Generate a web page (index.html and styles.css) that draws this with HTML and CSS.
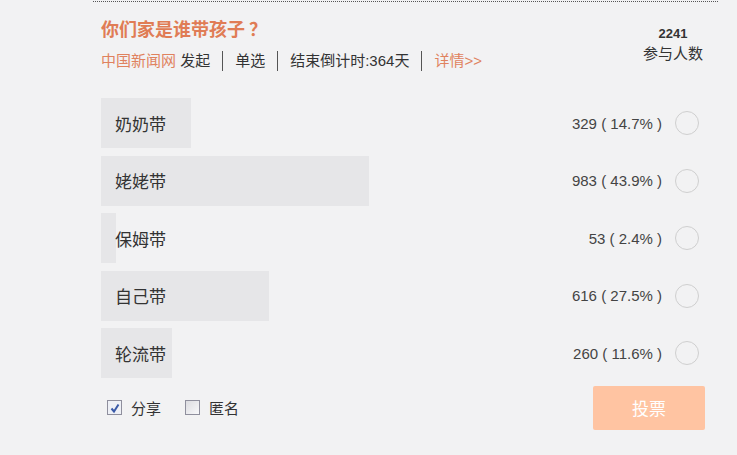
FILE: index.html
```html
<!DOCTYPE html>
<html>
  <head>
    <title>你们家是谁带孩子？</title>
    <link rel="stylesheet" href="styles.css">
  </head>
  <body>
    <div class="topline"></div>
    <div class="poll">
      <div class="poll-head">
        <div class="poll-info">
          <h1>你们家是谁带孩子<span class="qmark">？</span></h1>
          <div class="meta">
            <span class="item"><span class="source">中国新闻网</span> 发起</span>
            <span class="item">单选</span>
            <span class="item">结束倒计时:364天</span>
            <span class="item"><a class="more" href="#">详情&gt;&gt;</a></span>
          </div>
        </div>
        <div class="total">
          <div class="total-num">2241</div>
          <div class="total-label">参与人数</div>
        </div>
      </div>

      <ul class="options">
        <li class="option">
          <div class="bar" style="width: 14.7%"></div>
          <span class="label">奶奶带</span>
          <span class="stat">329 ( 14.7% )<span class="radio"></span></span>
        </li>
        <li class="option">
          <div class="bar" style="width: 43.9%"></div>
          <span class="label">姥姥带</span>
          <span class="stat">983 ( 43.9% )<span class="radio"></span></span>
        </li>
        <li class="option">
          <div class="bar" style="width: 2.4%"></div>
          <span class="label">保姆带</span>
          <span class="stat">53 ( 2.4% )<span class="radio"></span></span>
        </li>
        <li class="option">
          <div class="bar" style="width: 27.5%"></div>
          <span class="label">自己带</span>
          <span class="stat">616 ( 27.5% )<span class="radio"></span></span>
        </li>
        <li class="option">
          <div class="bar" style="width: 11.6%"></div>
          <span class="label">轮流带</span>
          <span class="stat">260 ( 11.6% )<span class="radio"></span></span>
        </li>
      </ul>

      <div class="poll-foot">
        <div class="checks">
          <label class="check">
            <span class="box checked">
              <svg width="12" height="12" viewBox="0 0 12 12">
                <path d="M2.5 6.5 L5 9.5 L9.5 2.5" fill="none" stroke="#3a5aa8" stroke-width="2" />
              </svg>
            </span>
            分享
          </label>
          <label class="check">
            <span class="box"></span>
            匿名
          </label>
        </div>
        <button class="vote">投票</button>
      </div>
    </div>
  </body>
</html>
```

FILE: styles.css
```css
body {
  margin: 0;
  background-color: #f2f2f3;
  font-family: "Liberation Sans", "Noto Sans CJK SC", sans-serif;
  color: #333;
}
.topline {
  margin-left: 93px;
  width: 625px;
  border-top: 1px dotted #555;
  margin-top: 1px;
}
.poll {
  margin-left: 101px;
  width: 610px;
}
.poll-head {
  display: flex;
  justify-content: space-between;
  align-items: flex-start;
  padding-top: 16px;
}
h1 {
  margin: 0;
  font-size: 18px;
  line-height: 24px;
  font-weight: bold;
  color: #e07c55;
}
.qmark {
  margin-left: 4px;
}
.meta {
  display: flex;
  align-items: center;
  margin-top: 9px;
  font-size: 15px;
  line-height: 20px;
  color: #333;
}
.meta .item {
  padding: 0 12px;
  border-left: 1px solid #555;
}
.meta .item:first-child {
  padding-left: 0;
  border-left: none;
}
.source,
.more {
  color: #e0825e;
  text-decoration: none;
}
.total {
  width: 76px;
  margin-top: 6px;
  text-align: center;
  font-size: 15px;
  line-height: 20px;
}
.total-num {
  font-weight: bold;
  font-size: 13px;
}
.options {
  list-style: none;
  margin: 27px 0 0;
  padding: 0;
}
.option {
  display: grid;
  grid-template-columns: 1fr auto;
  align-items: center;
  height: 50px;
  margin-bottom: 7.5px;
}
.bar {
  grid-area: 1 / 1 / 2 / 3;
  height: 50px;
  background-color: #e6e6e8;
}
.label {
  grid-area: 1 / 1;
  padding-left: 14px;
  font-size: 17px;
  color: #333;
}
.stat {
  grid-area: 1 / 2;
  display: flex;
  align-items: center;
  gap: 13px;
  padding-right: 12px;
  font-size: 15px;
  color: #444;
}
.radio {
  width: 22px;
  height: 22px;
  border: 1px solid #cfcfcf;
  border-radius: 50%;
}
.poll-foot {
  display: flex;
  justify-content: space-between;
  align-items: center;
  margin-top: 0;
}
.checks {
  display: flex;
  gap: 24px;
  padding-left: 6px;
}
.check {
  display: flex;
  align-items: center;
  gap: 9px;
  font-size: 15px;
  color: #333;
}
.box {
  display: flex;
  align-items: center;
  justify-content: center;
  width: 13px;
  height: 13px;
  border: 1px solid #8f8f9d;
  background: linear-gradient(135deg, #dcdce0, #f8f8fa);
}
.box.checked {
  background: #eef0f6;
}
.vote {
  width: 112px;
  height: 44px;
  margin-right: 6px;
  border: none;
  border-radius: 2px;
  background-color: #ffc4a2;
  color: #fff;
  font-family: "Noto Sans CJK SC", sans-serif;
  font-size: 17px;
}
```
